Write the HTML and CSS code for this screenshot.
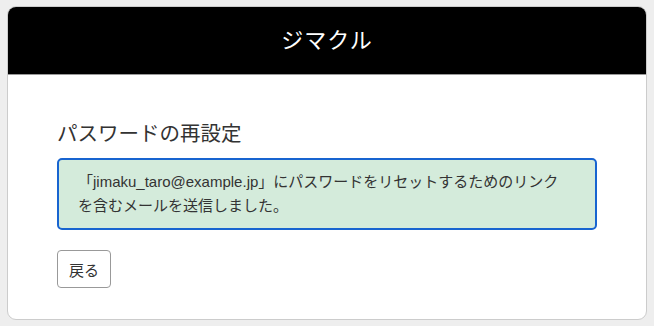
FILE: index.html
```html
<!DOCTYPE html>
<html lang="ja">
<head>
    <meta charset="UTF-8">
    <meta name="viewport" content="width=device-width, initial-scale=1.0">
    <title>パスワードの再設定 | ジマクル</title>
    <link rel="stylesheet" href="styles.css">
</head>
<body>
    <div class="card">
        <header class="card-header">
            <h1 class="site-title">ジマクル</h1>
        </header>

        <main class="card-body">
            <h2 class="page-title">パスワードの再設定</h2>

            <div class="notice">
                「jimaku_taro@example.jp」にパスワードをリセットするためのリンクを含むメールを送信しました。
            </div>

            <button class="back-btn" type="button">戻る</button>
        </main>
    </div>
</body>
</html>
```

FILE: styles.css
```css
* { margin: 0; padding: 0; box-sizing: border-box; }

body {
    background: #eeeeee;
    color: #333;
    font-family: "Liberation Sans", "Noto Sans CJK JP", sans-serif;
    padding: 6px 7px;
}

.card {
    background: #fff;
    border: 1px solid #cccccc;
    border-radius: 9px;
    overflow: hidden;
}

.card-header {
    background: #000;
    border-bottom: 1px solid #999;
    height: 68px;
    display: flex;
    align-items: center;
    justify-content: center;
}

.site-title {
    color: #fff;
    font-size: 22px;
    font-weight: normal;
    letter-spacing: 1px;
    line-height: 1;
}

.card-body {
    padding: 43px 49px 31px;
}

.page-title {
    font-size: 20.5px;
    font-weight: normal;
    line-height: 32px;
    margin-bottom: 8px;
}

.notice {
    background: #d4ebdb;
    border: 2px solid #1864d0;
    border-radius: 5px;
    padding: 10px 30px 10px 19px;
    font-size: 15px;
    line-height: 24px;
}

.back-btn {
    margin-top: 20px;
    background: #fff;
    color: #333;
    border: 1px solid #999;
    border-radius: 4px;
    padding: 0 11px;
    height: 38px;
    font-family: inherit;
    font-size: 15px;
}
```
